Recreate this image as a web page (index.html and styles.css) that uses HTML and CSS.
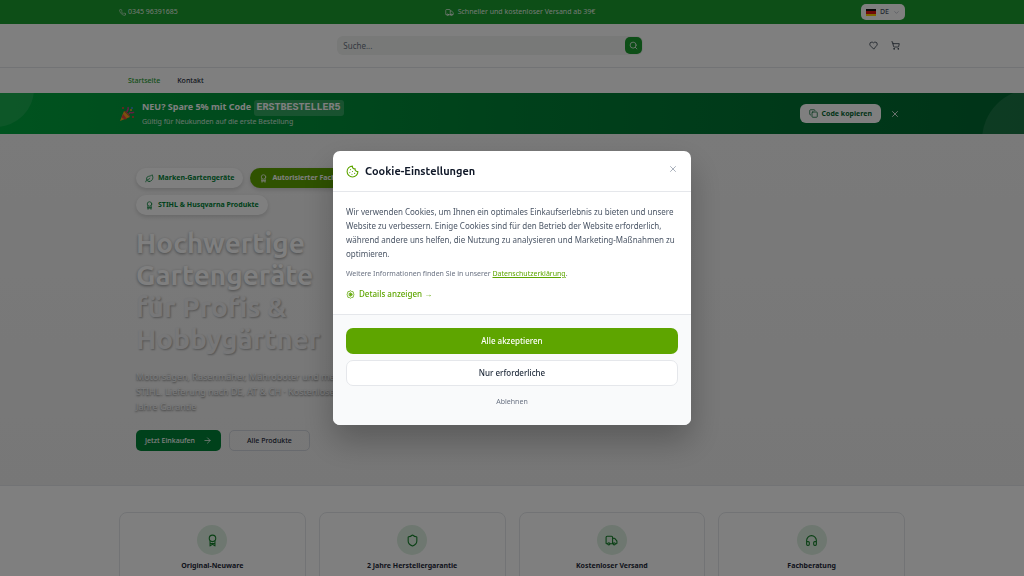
FILE: index.html
```html
<!DOCTYPE html>
<html lang="de">
<head>
  <meta charset="UTF-8">
  <meta name="viewport" content="width=device-width, initial-scale=1.0">
  <title>Hochwertige Gartengeräte für Profis &amp; Hobbygärtner</title>
  <link rel="stylesheet" href="styles.css">
</head>
<body>
  <!-- Icon sprite -->
  <svg class="sprite" aria-hidden="true">
    <symbol id="i-phone" viewBox="0 0 24 24"><path d="M22 16.92v3a2 2 0 0 1-2.18 2 19.8 19.8 0 0 1-8.63-3.07 19.5 19.5 0 0 1-6-6A19.8 19.8 0 0 1 2.12 4.18 2 2 0 0 1 4.11 2h3a2 2 0 0 1 2 1.72c.13.96.36 1.9.7 2.81a2 2 0 0 1-.45 2.11L8.09 9.91a16 16 0 0 0 6 6l1.27-1.27a2 2 0 0 1 2.11-.45c.91.34 1.85.57 2.81.7A2 2 0 0 1 22 16.92z"/></symbol>
    <symbol id="i-truck" viewBox="0 0 24 24"><path d="M14 18V6a2 2 0 0 0-2-2H4a2 2 0 0 0-2 2v11a1 1 0 0 0 1 1h2M15 18H9M19 18h2a1 1 0 0 0 1-1v-3.65a1 1 0 0 0-.22-.62l-3.48-4.35A1 1 0 0 0 17.52 8H14"/><circle cx="17" cy="18" r="2"/><circle cx="7" cy="18" r="2"/></symbol>
    <symbol id="i-search" viewBox="0 0 24 24"><circle cx="11" cy="11" r="8"/><path d="m21 21-4.3-4.3"/></symbol>
    <symbol id="i-heart" viewBox="0 0 24 24"><path d="M19 14c1.49-1.46 3-3.21 3-5.5A5.5 5.5 0 0 0 16.5 3c-1.76 0-3 .5-4.5 2-1.5-1.5-2.74-2-4.5-2A5.5 5.5 0 0 0 2 8.5c0 2.3 1.5 4.05 3 5.5l7 7Z"/></symbol>
    <symbol id="i-cart" viewBox="0 0 24 24"><circle cx="8" cy="21" r="1"/><circle cx="19" cy="21" r="1"/><path d="M2.05 2.05h2l2.66 12.42a2 2 0 0 0 2 1.58h9.78a2 2 0 0 0 1.95-1.57l1.65-7.43H5.12"/></symbol>
    <symbol id="i-chevron" viewBox="0 0 24 24"><path d="m6 9 6 6 6-6"/></symbol>
    <symbol id="i-copy" viewBox="0 0 24 24"><rect x="8" y="8" width="14" height="14" rx="2"/><path d="M4 16c-1.1 0-2-.9-2-2V4c0-1.1.9-2 2-2h10c1.1 0 2 .9 2 2"/></symbol>
    <symbol id="i-x" viewBox="0 0 24 24"><path d="M18 6 6 18M6 6l12 12"/></symbol>
    <symbol id="i-leaf" viewBox="0 0 24 24"><path d="M11 20A7 7 0 0 1 9.8 6.1C15.5 5 17 4.48 19 2c1 2 2 4.18 2 8 0 5.5-4.78 10-10 10Z"/><path d="M2 21c0-3 1.85-5.36 5.08-6C9.5 14.52 12 13 13 12"/></symbol>
    <symbol id="i-award" viewBox="0 0 24 24"><circle cx="12" cy="8" r="6"/><path d="M7.5 13v9l4.500-3 4.500 3v-9M7.500 17.500h9"/></symbol>
    <symbol id="i-shield" viewBox="0 0 24 24"><path d="M20 13c0 5-3.500 7.500-7.660 8.950a1 1 0 0 1-.67-.01C7.500 20.500 4 18 4 13V6a1 1 0 0 1 1-1c2 0 4.500-1.200 6.240-2.720a1.170 1.170 0 0 1 1.520 0C14.510 3.810 17 5 19 5a1 1 0 0 1 1 1z"/></symbol>
    <symbol id="i-headphones" viewBox="0 0 24 24"><path d="M3 14h3a2 2 0 0 1 2 2v3a2 2 0 0 1-2 2H5a2 2 0 0 1-2-2v-7a9 9 0 0 1 18 0v7a2 2 0 0 1-2 2h-1a2 2 0 0 1-2-2v-3a2 2 0 0 1 2-2h3"/></symbol>
    <symbol id="i-arrow" viewBox="0 0 24 24"><path d="M5 12h14M12 5l7 7-7 7"/></symbol>
    <symbol id="i-cookie" viewBox="0 0 24 24"><path d="M12 2a10 10 0 1 0 10 10 4 4 0 0 1-5-5 4 4 0 0 1-5-5M8.500 8.500v.01M16 15.500v.01M12 12v.01M11 17v.01M7 14v.01"/></symbol>
    <symbol id="i-gear" viewBox="0 0 24 24"><path d="M12 2l3 2 4 .5 1 4 1 3.500-1 3.500-1 4-4 .5-3 2-3-2-4-.5-1-4L3 12l1-3.500 1-4L9 4z"/><circle cx="12" cy="12" r="4"/><path d="M12 8v8M8.500 10l7 4M8.500 14l7-4"/></symbol>
  </svg>

  <div class="topbar">
    <div class="container topbar-inner">
      <a class="topbar-item" href="tel:034596391685"><svg class="icon icon-xs"><use href="#i-phone"/></svg>0345 96391685</a>
      <span class="topbar-item topbar-shipping"><svg class="icon icon-sm"><use href="#i-truck"/></svg>Schneller und kostenloser Versand ab 39€</span>
      <button class="lang" type="button">
        <svg class="flag" viewBox="0 0 10 7"><path fill="#111" d="M0 0h10v3H0z"/><path fill="#e01010" d="M0 2h10v3H0z"/><path fill="#ffce00" d="M0 5h10v2H0z"/></svg>
        DE
        <svg class="icon icon-xs"><use href="#i-chevron"/></svg>
      </button>
    </div>
  </div>

  <header class="header">
    <div class="container header-inner">
      <form class="search" role="search">
        <input type="search" placeholder="Suche..." aria-label="Suche">
        <button type="submit" aria-label="Suchen"><svg class="icon icon-sm"><use href="#i-search"/></svg></button>
      </form>
      <div class="header-actions">
        <a href="#" aria-label="Wunschliste"><svg class="icon icon-sm"><use href="#i-heart"/></svg></a>
        <a href="#" aria-label="Warenkorb"><svg class="icon icon-sm"><use href="#i-cart"/></svg></a>
      </div>
    </div>
  </header>

  <nav class="nav">
    <div class="container nav-inner">
      <a class="active" href="#">Startseite</a>
      <a href="#">Kontakt</a>
    </div>
  </nav>

  <section class="promo">
    <div class="container promo-inner">
      <svg class="party" viewBox="0 0 16 16">
        <path fill="#f2a01e" d="M1 15 5 5l6 6z"/>
        <path fill="#e8453c" d="M2.500 11.500 4 8l4 5-2 .5zM5 5l6 6c1-1-4-7-6-6z"/>
        <path fill="none" stroke="#c93a8a" stroke-width="1.500" d="M8 6c0-2 2-2 1-5M10 8c1-3 3 0 5-2"/>
        <circle cx="4" cy="2" r="1" fill="#e8453c"/><circle cx="13" cy="2" r="1" fill="#3f8ee0"/><circle cx="14" cy="11" r="1" fill="#e8453c"/><circle cx="12" cy="4" r="1" fill="#f2a01e"/>
      </svg>
      <div class="promo-text">
        <p class="promo-title">NEU? Spare 5% mit Code <code>ERSTBESTELLER5</code></p>
        <p class="promo-sub">Gültig für Neukunden auf die erste Bestellung</p>
      </div>
      <button class="copy" type="button"><svg class="icon icon-sm"><use href="#i-copy"/></svg>Code kopieren</button>
      <button class="promo-close" type="button" aria-label="Schließen"><svg class="icon icon-md"><use href="#i-x"/></svg></button>
    </div>
  </section>

  <main>
    <section class="hero">
      <div class="container hero-inner">
        <div class="badges">
          <span class="badge"><svg class="icon icon-sm"><use href="#i-leaf"/></svg>Marken-Gartengeräte</span>
          <span class="badge badge-solid"><svg class="icon icon-sm"><use href="#i-award"/></svg>Autorisierter Fachhändler</span>
          <span class="badge"><svg class="icon icon-sm"><use href="#i-award"/></svg>STIHL &amp; Husqvarna Produkte</span>
        </div>
        <h1>Hochwertige<br>Gartengeräte<br><span>für Profis &amp;<br>Hobbygärtner</span></h1>
        <p class="lead">Motorsägen, Rasenmäher, Mähroboter und mehr<br>STIHL. Lieferung nach DE, AT &amp; CH · Kostenloser<br>Jahre Garantie</p>
        <div class="hero-actions">
          <a class="btn btn-primary" href="#">Jetzt Einkaufen <svg class="icon icon-sm"><use href="#i-arrow"/></svg></a>
          <a class="btn btn-outline" href="#">Alle Produkte</a>
        </div>
      </div>
    </section>

    <section class="features">
      <div class="container features-grid">
        <article class="feature">
          <span class="feature-icon"><svg class="icon icon-lg"><use href="#i-award"/></svg></span>
          <h2>Original-Neuware</h2>
        </article>
        <article class="feature">
          <span class="feature-icon"><svg class="icon icon-lg"><use href="#i-shield"/></svg></span>
          <h2>2 Jahre Herstellergarantie</h2>
        </article>
        <article class="feature">
          <span class="feature-icon"><svg class="icon icon-lg"><use href="#i-truck"/></svg></span>
          <h2>Kostenloser Versand</h2>
        </article>
        <article class="feature">
          <span class="feature-icon"><svg class="icon icon-lg"><use href="#i-headphones"/></svg></span>
          <h2>Fachberatung</h2>
        </article>
      </div>
    </section>
  </main>

  <!-- Cookie consent -->
  <div class="overlay">
    <div class="modal" role="dialog" aria-modal="true" aria-labelledby="cookie-title">
      <div class="modal-header">
        <svg class="icon icon-lg"><use href="#i-cookie"/></svg>
        <h2 id="cookie-title">Cookie-Einstellungen</h2>
        <button class="modal-close" type="button" aria-label="Schließen"><svg class="icon icon-md"><use href="#i-x"/></svg></button>
      </div>
      <div class="modal-body">
        <p>Wir verwenden Cookies, um Ihnen ein optimales Einkaufserlebnis zu bieten und unsere Website zu verbessern. Einige Cookies sind für den Betrieb der Website erforderlich, während andere uns helfen, die Nutzung zu analysieren und Marketing-Maßnahmen zu optimieren.</p>
        <p class="more">Weitere Informationen finden Sie in unserer <a href="#">Datenschutzerklärung</a>.</p>
        <button class="details" type="button"><svg class="icon icon-sm"><use href="#i-gear"/></svg>Details anzeigen →</button>
      </div>
      <div class="modal-footer">
        <button class="accept" type="button">Alle akzeptieren</button>
        <button class="required" type="button">Nur erforderliche</button>
        <button class="decline" type="button">Ablehnen</button>
      </div>
    </div>
  </div>
</body>
</html>
```
FILE: styles.css
```css
:root {
  --green: #1b9c2e;
  --green-dark: #008236;
  --lime: #5ea500;
  --text: #1e2939;
  --border: #e5e7eb;
}

* {
  box-sizing: border-box;
  margin: 0;
  padding: 0;
}

body {
  font-family: "Noto Sans", sans-serif;
  font-size: 8px;
  line-height: 14px;
  color: var(--text);
  background: #fff;
  overflow: hidden;
}

a {
  color: inherit;
  text-decoration: none;
}

button {
  font: inherit;
  color: inherit;
  background: none;
  border: none;
  cursor: pointer;
}

.sprite {
  display: none;
}

.container {
  width: 100%;
  max-width: 786px;
  margin: 0 auto;
}

.icon {
  flex: none;
  fill: none;
  stroke: currentColor;
  stroke-width: 2;
  stroke-linecap: round;
  stroke-linejoin: round;
}

.icon-xs { width: 7px; height: 7px; }
.icon-sm { width: 9px; height: 9px; }
.icon-md { width: 10px; height: 10px; }
.icon-lg { width: 13px; height: 13px; }

/* Top bar */
.topbar {
  background: var(--green);
  color: rgba(255, 255, 255, 0.9);
  font-size: 7px;
}

.topbar-inner {
  display: grid;
  grid-template-columns: 1fr auto 1fr;
  align-items: center;
  height: 24px;
}

.topbar-item {
  display: flex;
  align-items: center;
  gap: 2px;
}

.topbar-shipping {
  gap: 4px;
  padding-left: 16px;
}

.lang {
  display: flex;
  align-items: center;
  justify-self: end;
  gap: 4px;
  height: 16px;
  padding: 0 5px;
  border-radius: 5px;
  background: #fff;
  color: #4a5565;
  font-weight: 500;
}

.flag {
  width: 10px;
  height: 7px;
}

.lang .icon {
  color: #99a1af;
}

/* Header */
.header {
  border-bottom: 1px solid var(--border);
}

.header-inner {
  display: grid;
  grid-template-columns: 5fr 7fr 6fr;
  align-items: center;
  height: 43px;
}

.search {
  grid-column: 2;
  display: flex;
  align-items: center;
  height: 19px;
  padding-right: 1px;
  border-radius: 6px;
  background: #f0f2f0;
}

.search input {
  flex: 1;
  min-width: 0;
  padding: 0 6px;
  border: none;
  outline: none;
  background: none;
  font: inherit;
}

.search input::placeholder {
  color: #6a7282;
}

.search button {
  display: flex;
  align-items: center;
  justify-content: center;
  width: 17px;
  height: 17px;
  border-radius: 5px;
  background: var(--green);
  color: #fff;
}

.header-actions {
  display: flex;
  justify-content: flex-end;
  gap: 13px;
  padding-right: 5px;
}

.header-actions .icon {
  display: block;
}

/* Navigation */
.nav-inner {
  display: flex;
  align-items: center;
  gap: 17px;
  height: 25px;
  padding-left: 9px;
  font-size: 7px;
  font-weight: 500;
}

.nav .active {
  color: var(--green);
}

/* Promo banner */
.promo {
  position: relative;
  overflow: hidden;
  background: linear-gradient(to right, #00a63e, #008236 50%, #016630);
  color: #fff;
}

.promo::before,
.promo::after {
  content: "";
  position: absolute;
  border-radius: 50%;
  background: rgba(255, 255, 255, 0.1);
}

.promo::before {
  left: -42px;
  top: -42px;
  width: 76px;
  height: 76px;
}

.promo::after {
  right: -60px;
  top: -4px;
  width: 102px;
  height: 102px;
}

.promo-inner {
  display: flex;
  align-items: center;
  height: 41px;
  padding-right: 5px;
}

.party {
  width: 16px;
  height: 16px;
  margin-right: 7px;
}

.promo-text {
  flex: 1;
}

.promo-title {
  font-size: 9px;
  font-weight: 700;
  line-height: 16px;
}

.promo-title code {
  display: inline-block;
  padding: 0 3px;
  border-radius: 3px;
  background: rgba(255, 255, 255, 0.2);
  font-family: "Liberation Mono", monospace;
  font-size: 10px;
}

.promo-sub {
  font-size: 7px;
  line-height: 12px;
  opacity: 0.8;
}

.copy {
  display: flex;
  align-items: center;
  gap: 4px;
  height: 19px;
  padding: 0 9px;
  border-radius: 6px;
  background: #fff;
  color: #016630;
  font-size: 7px;
  font-weight: 700;
}

.promo-close {
  display: flex;
  margin-left: 9px;
}

/* Hero */
.hero {
  border-bottom: 1px solid var(--border);
  background: linear-gradient(#f4f4f4, #efefef);
}

.hero-inner {
  padding: 34px 17px;
}

.badges {
  display: flex;
  flex-wrap: wrap;
  gap: 7px;
  max-width: 260px;
}

.badge {
  display: flex;
  align-items: center;
  gap: 4px;
  height: 20px;
  padding: 0 9px;
  border-radius: 10px;
  background: #fff;
  color: var(--green-dark);
  font-size: 7px;
  font-weight: 700;
  box-shadow: 0 2px 4px rgba(0, 0, 0, 0.15);
}

.badge-solid {
  background: var(--lime);
  color: #fff;
}

h1 {
  margin-top: 12px;
  color: #fff;
  font-family: Ubuntu, "Noto Sans", sans-serif;
  font-size: 28px;
  line-height: 32px;
  font-weight: 700;
  text-shadow: 0 1px 3px rgba(0, 0, 0, 0.4);
}

h1 span {
  color: #eeeff1;
  text-shadow: 1px 1px 2px rgba(0, 0, 0, 0.3);
}

.lead {
  margin-top: 14px;
  color: #f3f4f6;
  font-size: 9px;
  line-height: 15px;
  text-shadow: 0 1px 2px rgba(0, 0, 0, 0.6);
}

.hero-actions {
  display: flex;
  gap: 8px;
  margin-top: 16px;
}

.btn {
  display: flex;
  align-items: center;
  justify-content: center;
  gap: 8px;
  height: 21px;
  padding: 0 8px;
  border: 1px solid transparent;
  border-radius: 5px;
  font-size: 7px;
  font-weight: 500;
}

.btn-primary {
  background: var(--green-dark);
  color: #fff;
}

.btn-outline {
  padding: 0 17px;
  border-color: #d1d5dc;
}

/* Features */
.features {
  padding: 26px 0;
}

.features-grid {
  display: grid;
  grid-template-columns: repeat(4, 1fr);
  gap: 13px;
}

.feature {
  display: flex;
  flex-direction: column;
  align-items: center;
  padding: 12px;
  border: 1px solid var(--border);
  border-radius: 8px;
}

.feature-icon {
  display: flex;
  align-items: center;
  justify-content: center;
  width: 30px;
  height: 30px;
  border-radius: 50%;
  background: #dcefe0;
  color: #15802a;
}

.feature h2 {
  margin-top: 4px;
  font-size: 7px;
  font-weight: 700;
  line-height: 14px;
}

/* Cookie modal */
.overlay {
  position: fixed;
  inset: 0;
  display: flex;
  align-items: center;
  justify-content: center;
  background: rgba(0, 0, 0, 0.5);
}

.modal {
  width: 100%;
  max-width: 358px;
  overflow: hidden;
  border-radius: 7px;
  background: #fff;
  box-shadow: 0 16px 32px rgba(0, 0, 0, 0.25);
}

.modal-header {
  display: flex;
  align-items: center;
  gap: 6px;
  height: 41px;
  padding: 0 13px;
  border-bottom: 1px solid var(--border);
}

.modal-header > .icon {
  color: var(--lime);
}

.modal-header h2 {
  flex: 1;
  color: #101828;
  font-family: Ubuntu, "Noto Sans", sans-serif;
  font-size: 11px;
  font-weight: 600;
}

.modal-close {
  display: flex;
  padding-bottom: 4px;
  color: #99a1af;
}

.modal-body {
  padding: 13px;
  color: #4a5565;
}

.modal-body .more {
  margin-top: 6px;
  color: #6a7282;
  font-size: 7px;
}

.modal-body a {
  color: var(--lime);
  text-decoration: underline;
}

.details {
  display: flex;
  align-items: center;
  gap: 4px;
  margin-top: 6px;
  color: var(--lime);
  font-weight: 500;
}

.modal-footer {
  display: flex;
  flex-direction: column;
  gap: 6px;
  padding: 13px;
  border-top: 1px solid var(--border);
  background: #f9fafb;
}

.accept,
.required {
  height: 26px;
  border-radius: 7px;
  font-weight: 500;
}

.accept {
  background: var(--lime);
  color: #fff;
}

.required {
  border: 1px solid var(--border);
  background: #fff;
}

.decline {
  height: 20px;
  color: #6a7282;
  font-size: 7px;
}
```
